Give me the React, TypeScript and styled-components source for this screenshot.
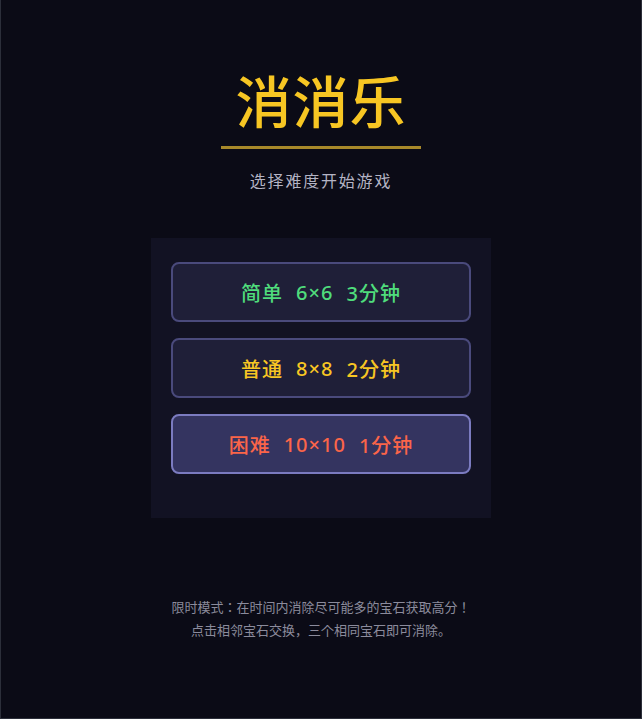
import React from "react";
import styled, { createGlobalStyle } from "styled-components";

const Global = createGlobalStyle`
  html, body { margin: 0; padding: 0; background: #0b0b16; }
  body { font-family: "Noto Sans", "Noto Sans CJK JP", sans-serif; }
  * { box-sizing: border-box; }
`;

const Page = styled.div`
  min-height: 100vh;
  display: flex;
  flex-direction: column;
  align-items: center;
  padding-top: 68px;
  background: #0b0b16;
  border: 1px solid #2c2f3a;
  border-top: none;
`;

const Title = styled.h1`
  margin: 0;
  font-size: 56px;
  line-height: 67px;
  font-weight: 500;
  color: #f7c623;
  letter-spacing: 1px;
`;

const Rule = styled.div`
  width: 200px;
  height: 3px;
  margin-top: 11px;
  background: #a8892a;
`;

const Subtitle = styled.p`
  margin: 20px 0 0;
  font-size: 16px;
  line-height: 24px;
  color: #b4b4c4;
  letter-spacing: 1.8px;
`;

const Panel = styled.div`
  margin-top: 45px;
  width: 340px;
  padding: 24px 20px 44px;
  background: #121223;
  display: flex;
  flex-direction: column;
  gap: 16px;
`;

const LevelButton = styled.button<{ $active?: boolean; $color: string }>`
  height: 60px;
  width: 100%;
  border-radius: 8px;
  border: 2px solid ${(p) => (p.$active ? "#7b7bc0" : "#4a4a7c")};
  background: ${(p) => (p.$active ? "#343460" : "#1f1f38")};
  color: ${(p) => p.$color};
  font-family: "Noto Sans", "Noto Sans CJK JP", sans-serif;
  font-size: 20px;
  font-weight: 500;
  letter-spacing: 1px;
  display: flex;
  align-items: center;
  justify-content: center;
  gap: 13px;
  cursor: pointer;
`;

const Footer = styled.div`
  margin-top: 77px;
  text-align: center;
  font-family: "Noto Sans CJK JP", sans-serif;
  font-size: 13px;
  line-height: 23px;
  color: #8b8b9c;
`;

const levels = [
  { name: "简单", size: "6×6", time: "3分钟", color: "#4fdc7c" },
  { name: "普通", size: "8×8", time: "2分钟", color: "#f7c623" },
  { name: "困难", size: "10×10", time: "1分钟", color: "#fb6549", active: true },
];

export default function App() {
  return (
    <>
      <Global />
      <Page>
        <Title>消消乐</Title>
        <Rule />
        <Subtitle>选择难度开始游戏</Subtitle>
        <Panel>
          {levels.map((l) => (
            <LevelButton key={l.name} $color={l.color} $active={l.active}>
              <span>{l.name}</span>
              <span>{l.size}</span>
              <span>{l.time}</span>
            </LevelButton>
          ))}
        </Panel>
        <Footer>
          限时模式：在时间内消除尽可能多的宝石获取高分！
          <br />
          点击相邻宝石交换，三个相同宝石即可消除。
        </Footer>
      </Page>
    </>
  );
}
